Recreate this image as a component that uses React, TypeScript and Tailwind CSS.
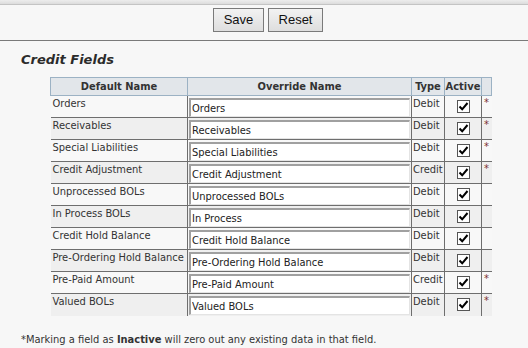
import React from "react";

type Row = [string, string, string, boolean];

const rows: Row[] = [
  ["Orders", "Orders", "Debit", true],
  ["Receivables", "Receivables", "Debit", true],
  ["Special Liabilities", "Special Liabilities", "Debit", true],
  ["Credit Adjustment", "Credit Adjustment", "Credit", true],
  ["Unprocessed BOLs", "Unprocessed BOLs", "Debit", false],
  ["In Process BOLs", "In Process", "Debit", false],
  ["Credit Hold Balance", "Credit Hold Balance", "Debit", false],
  ["Pre-Ordering Hold Balance", "Pre-Ordering Hold Balance", "Debit", false],
  ["Pre-Paid Amount", "Pre-Paid Amount", "Credit", true],
  ["Valued BOLs", "Valued BOLs", "Debit", true],
];

const bodyFont = "font-['DejaVu_Sans_Condensed','DejaVu_Sans',sans-serif]";

function Check() {
  return (
    <span className="mx-auto flex h-[13px] w-[13px] items-center justify-center border border-[#555] bg-white">
      <svg width="11" height="11" viewBox="0 0 11 11">
        <path d="M1.5 5.5 L4.2 8.3 L9.5 2" fill="none" stroke="#000" strokeWidth="2" />
      </svg>
    </span>
  );
}

export default function App() {
  return (
    <div className={`h-[348px] w-[528px] overflow-hidden bg-[#f7f7f7] text-[#333] ${bodyFont}`}>
      <div className="h-[5px] border-b border-[#c4c4c4] bg-gradient-to-b from-[#ededed] to-[#dcdcdc]" />
      <div className="flex h-[36px] justify-center gap-[4px] border-b border-[#7a7a7a] pl-[8px] pt-[3px] font-['Liberation_Sans',Arial,sans-serif] text-[13px] text-[#111]">
        <button className="h-[24px] w-[51px] border border-[#7a7a7a] bg-gradient-to-b from-[#f2f2f2] to-[#dedede]">Save</button>
        <button className="h-[24px] w-[55px] border border-[#7a7a7a] bg-gradient-to-b from-[#f2f2f2] to-[#dedede]">Reset</button>
      </div>
      <div className="pl-[21px] pt-[11px] font-['DejaVu_Sans',sans-serif] text-[13px] font-bold italic leading-[16px] text-[#2b2b2b]">
        Credit Fields
      </div>
      <table className="ml-[50px] mt-[9px] table-fixed border-collapse text-[11px] leading-[13px]">
        <colgroup>
          <col className="w-[137px]" />
          <col className="w-[224px]" />
          <col className="w-[33px]" />
          <col className="w-[37px]" />
          <col className="w-[10px]" />
        </colgroup>
        <thead>
          <tr className="h-[18px] bg-[#e2e6ea] font-bold">
            <th className="border border-[#9cb2c4] text-center">Default Name</th>
            <th className="border border-[#9cb2c4] border-l-[#555] text-center">Override Name</th>
            <th className="border border-[#9cb2c4] border-l-[#555] text-center">Type</th>
            <th className="border border-[#9cb2c4] border-l-[#555] text-center">Active</th>
            <th className="border border-[#9cb2c4] border-l-[#555]"></th>
          </tr>
        </thead>
        <tbody>
          {rows.map(([name, override, type, star], i) => (
            <tr
              key={name}
              className={`h-[22px] ${i < rows.length - 1 ? "border-b border-[#6e6e6e]" : ""} ${i % 2 === 0 ? "bg-[#f8f8f8]" : "bg-[#efefef]"}`}
            >
              <td className="whitespace-nowrap px-[2px] pt-[1px] align-top">{name}</td>
              <td className="border-l border-[#6e6e6e] pl-[1px] pt-[2px] align-top">
                <input
                  readOnly
                  value={override}
                  className="block h-[19px] w-[221px] border-b border-l-2 border-r border-t-2 border-b-[#e4e4e4] border-l-[#a0a0a0] border-r-[#e4e4e4] border-t-[#a0a0a0] bg-white px-[1px] text-[11px] text-[#222] outline-none"
                />
              </td>
              <td className="border-l border-[#6e6e6e] pl-[1px] pt-[1px] align-top">{type}</td>
              <td className="border-l border-[#6e6e6e] pt-[4px] align-top">
                <Check />
              </td>
              <td className="border-l border-[#6e6e6e] pl-[2px] align-top text-[#7a3030]">{star ? "*" : ""}</td>
            </tr>
          ))}
        </tbody>
      </table>
      <div className="pl-[21px] pt-[17px] text-[11px] leading-[13px]">
        *Marking a field as <b>Inactive</b> will zero out any existing data in that field.
      </div>
    </div>
  );
}
